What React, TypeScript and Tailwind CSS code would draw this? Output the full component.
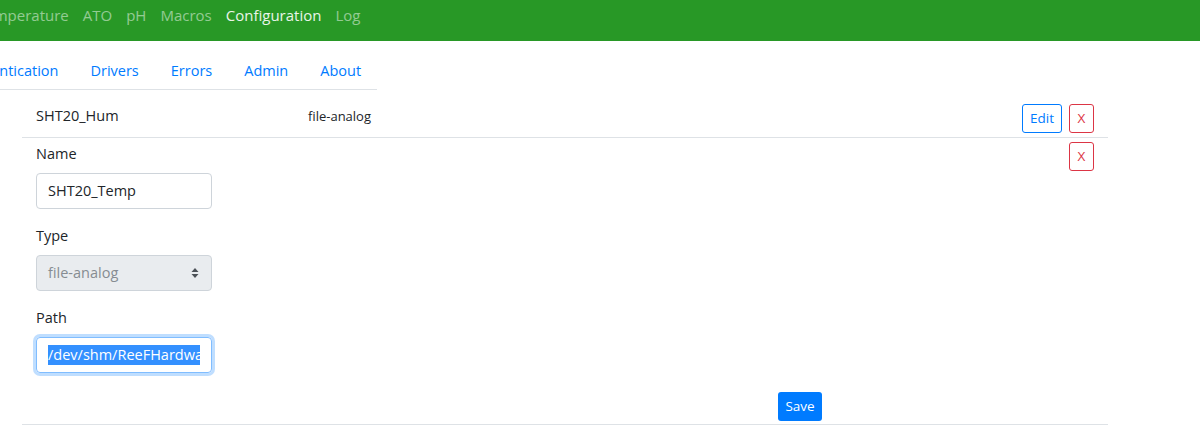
import React from "react";

const topLinks = [
  { label: "Temperature", active: false },
  { label: "ATO", active: false },
  { label: "pH", active: false },
  { label: "Macros", active: false },
  { label: "Configuration", active: true },
  { label: "Log", active: false },
];

const tabs = ["Authentication", "Drivers", "Errors", "Admin", "About"];

function SelectCaret() {
  return (
    <svg width="8" height="12" viewBox="0 0 8 12" className="shrink-0">
      <path d="M4 1 L7.5 5 L0.5 5 Z" fill="#4b5157" />
      <path d="M4 11 L7.5 7 L0.5 7 Z" fill="#4b5157" />
    </svg>
  );
}

function Field({ label, children, last }: { label: string; children: React.ReactNode; last?: boolean }) {
  return (
    <div className={last ? "" : "mb-[16px]"}>
      <div className="h-[22px] leading-[22px] mb-[8px]">{label}</div>
      {children}
    </div>
  );
}

export default function App() {
  return (
    <div className="w-[1200px] h-[428px] overflow-hidden bg-white text-[14.5px] text-[#212529] font-['Open_Sans','Noto_Sans',sans-serif]">
      {/* top navbar */}
      <nav className="h-[41px] bg-[#289826] overflow-hidden">
        <ul className="flex ml-[-30px] pt-[3px] text-[15px]">
          {topLinks.map((l) => (
            <li
              key={l.label}
              className={
                "px-[7px] leading-6 whitespace-nowrap " +
                (l.active ? "text-white/90" : "text-white/50")
              }
            >
              {l.label}
            </li>
          ))}
        </ul>
      </nav>

      {/* settings tabs */}
      <div className="pt-[8px]">
        <ul className="inline-flex ml-[-57px] border-b border-[#dee2e6]">
          {tabs.map((t) => (
            <li key={t} className="px-[16px] pt-[10px] pb-[6px] leading-6 text-[#007bff] whitespace-nowrap">
              {t}
            </li>
          ))}
        </ul>
      </div>

      <div className="ml-[22px] w-[1086px]">
        {/* existing driver row */}
        <div className="flex items-start border-b border-[#dee2e6] pt-[14px] pb-[4px] px-[14px]">
          <div className="w-[272px] mt-[1px] leading-[22px]">SHT20_Hum</div>
          <div className="mt-[1px] leading-[22px] text-[13px]">file-analog</div>
          <div className="flex-1" />
          <button className="h-[29px] w-[40px] rounded-[3px] border border-[#007bff] text-[#007bff] text-[13.5px] leading-none">
            Edit
          </button>
          <button className="ml-[7px] h-[29px] w-[25px] rounded-[3px] border border-[#dc3545] text-[#dc3545] text-[13.5px] leading-none">
            X
          </button>
        </div>

        {/* driver edit form */}
        <div className="border-b border-[#dee2e6] px-[14px] pb-[3px]">
          <div className="flex items-start">
            <div className="w-[176px] pt-[5px]">
              <Field label="Name">
                <div className="h-[36px] rounded-[4px] border border-[#ced4da] px-[11px] flex items-center">
                  SHT20_Temp
                </div>
              </Field>
              <Field label="Type">
                <div className="h-[36px] rounded-[4px] border border-[#ced4da] bg-[#e9ecef] pl-[11px] pr-[12px] flex items-center justify-between text-[#868c92]">
                  <span>file-analog</span>
                  <SelectCaret />
                </div>
              </Field>
              <Field label="Path" last>
                <div className="h-[36px] rounded-[4px] border border-[#80bdff] shadow-[0_0_0_3px_rgba(0,123,255,0.25)] px-[11px] flex items-center">
                  <div className="w-[152px] overflow-hidden whitespace-nowrap">
                    <span className="bg-[#3390ff] text-white leading-[20px] inline-block">
                      /dev/shm/ReeFHardware/SHT20_Temp
                    </span>
                  </div>
                </div>
              </Field>
            </div>
            <div className="flex-1" />
            <button className="mt-[4px] h-[29px] w-[25px] rounded-[3px] border border-[#dc3545] text-[#dc3545] text-[13.5px] leading-none">
              X
            </button>
          </div>
          <div className="pt-[19px] pl-[742px]">
            <button className="h-[29px] w-[44px] rounded-[3px] bg-[#007bff] text-white text-[13.5px] leading-none">
              Save
            </button>
          </div>
        </div>
      </div>
    </div>
  );
}
